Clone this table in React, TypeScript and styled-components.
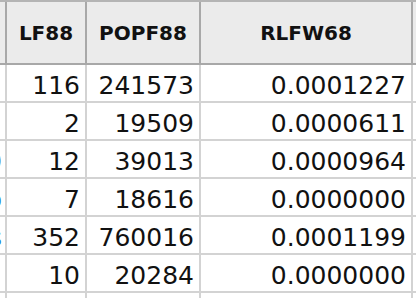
import React from "react";
import styled, { createGlobalStyle } from "styled-components";

const Global = createGlobalStyle`
  html, body { margin: 0; padding: 0; background: #ffffff; }
  body { width: 416px; height: 298px; overflow: hidden; font-family: "DejaVu Sans", "Liberation Sans", sans-serif; }
`;

const COLS = "7px 80px 114px 212px 1fr";

const Table = styled.div`
  width: 416px;
  height: 298px;
  overflow: hidden;
  display: flex;
  flex-direction: column;
  background: #ffffff;
`;

const HeaderRow = styled.div`
  display: grid;
  grid-template-columns: ${COLS};
  height: 65px;
  flex: none;
  border-top: 2px solid #b4b4b4;
  border-bottom: 2px solid #a8a8a8;
  background: #ebebeb;
  box-sizing: border-box;
`;

const HeaderCell = styled.div<{ $last?: boolean }>`
  display: flex;
  align-items: center;
  justify-content: center;
  box-sizing: border-box;
  border-right: ${(p) => (p.$last ? "none" : "2px solid #a8a8a8")};
  font-family: "DejaVu Sans", sans-serif;
  font-weight: bold;
  font-size: 20px;
  color: #111111;
  overflow: hidden;
  white-space: nowrap;
`;

const Row = styled.div`
  display: grid;
  grid-template-columns: ${COLS};
  height: 38px;
  flex: none;
  border-bottom: 2px solid #d3d3d3;
  box-sizing: border-box;
`;

const Cell = styled.div<{ $last?: boolean; $color?: string }>`
  display: flex;
  align-items: center;
  justify-content: flex-end;
  box-sizing: border-box;
  padding: 5px 5px 0 0;
  border-right: ${(p) => (p.$last ? "none" : "2px solid #d3d3d3")};
  font-family: "DejaVu Sans", sans-serif;
  font-size: 25px;
  color: ${(p) => p.$color ?? "#111111"};
  overflow: hidden;
  white-space: nowrap;
`;

const EdgeCell = styled(Cell)`
  padding-right: 3px;
`;

const Value = styled.span`
  flex: none;
`;

type RowData = { edge: string; edgeColor?: string; lf: string; pop: string; rl: string };

const rows: RowData[] = [
  { edge: "", lf: "116", pop: "241573", rl: "0.0001227" },
  { edge: "", lf: "2", pop: "19509", rl: "0.0000611" },
  { edge: "0", lf: "12", pop: "39013", rl: "0.0000964" },
  { edge: "o", edgeColor: "#2a7fd4", lf: "7", pop: "18616", rl: "0.0000000" },
  { edge: "s", edgeColor: "#2a7fd4", lf: "352", pop: "760016", rl: "0.0001199" },
  { edge: "", lf: "10", pop: "20284", rl: "0.0000000" },
  { edge: "", lf: "", pop: "", rl: "" },
];

export default function App() {
  return (
    <>
      <Global />
      <Table>
        <HeaderRow>
          <HeaderCell />
          <HeaderCell>LF88</HeaderCell>
          <HeaderCell>POPF88</HeaderCell>
          <HeaderCell>RLFW68</HeaderCell>
          <HeaderCell $last />
        </HeaderRow>
        {rows.map((r, i) => (
          <Row key={i}>
            <EdgeCell $color={r.edgeColor}>
              <Value>{r.edge}</Value>
            </EdgeCell>
            <Cell>
              <Value>{r.lf}</Value>
            </Cell>
            <Cell>
              <Value>{r.pop}</Value>
            </Cell>
            <Cell>
              <Value>{r.rl}</Value>
            </Cell>
            <Cell $last />
          </Row>
        ))}
      </Table>
    </>
  );
}
